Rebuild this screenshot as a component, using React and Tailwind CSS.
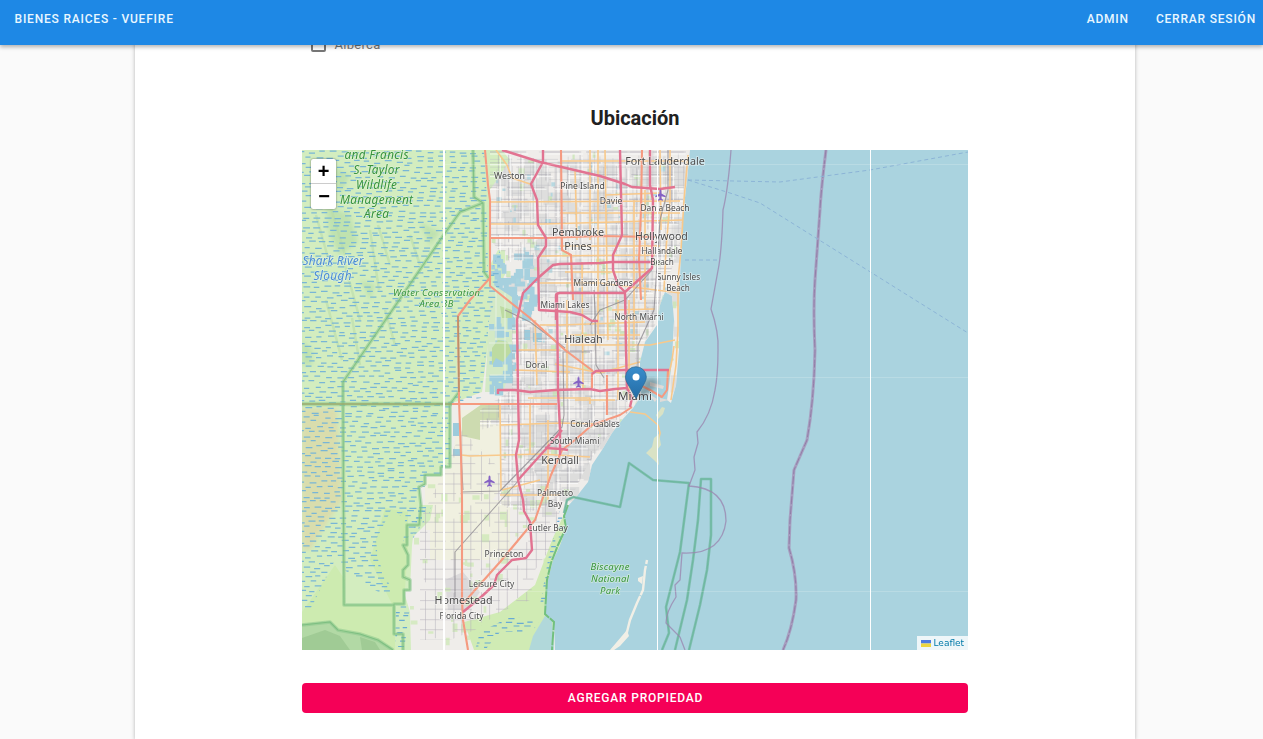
import React from "react";

// Deterministic generator so that the terrain texture is the same on each render.
function makeRandom(seed) {
  let s = seed;
  return () => {
    s = (s * 16807) % 2147483647;
    return s / 2147483647;
  };
}

function buildMarsh() {
  const rnd = makeRandom(71);
  let d = "";
  let row = 0;
  for (let y = 152; y < 650; y += 5) {
    for (let x = 298 + (row % 2) * 5 + rnd() * 3; x < 560; x += 9.5 + rnd() * 2.5) {
      d += `M${x.toFixed(1)} ${(y + rnd() * 3.4 - 1.7).toFixed(1)}h${(5 + rnd() * 2).toFixed(1)}`;
    }
    row += 1;
  }
  return d;
}

function buildStreets(seed, step) {
  const rnd = makeRandom(seed);
  let d = "";
  for (let x = 404; x < 690; x += step + rnd() * 3) {
    let y = 150 + rnd() * 20;
    while (y < 650) {
      const len = 20 + rnd() * 50;
      d += `M${x.toFixed(1)} ${y.toFixed(1)}v${len.toFixed(1)}`;
      y += len + rnd() * 24;
    }
  }
  for (let y = 152; y < 650; y += step + rnd() * 3) {
    let x = 404 + rnd() * 20;
    while (x < 690) {
      const len = 18 + rnd() * 45;
      d += `M${x.toFixed(1)} ${y.toFixed(1)}h${len.toFixed(1)}`;
      x += len + rnd() * 24;
    }
  }
  return d;
}

function buildBlocks(seed, count, x0, y0, x1, y1, size) {
  const rnd = makeRandom(seed);
  let d = "";
  for (let i = 0; i < count; i += 1) {
    const x = x0 + rnd() * (x1 - x0);
    const y = y0 + rnd() * (y1 - y0);
    const w = size * (0.4 + rnd());
    const h = size * (0.4 + rnd());
    d += `M${x.toFixed(1)} ${y.toFixed(1)}h${w.toFixed(1)}v${h.toFixed(1)}h-${w.toFixed(1)}z`;
  }
  return d;
}

const marsh = buildMarsh();
const streets = buildStreets(17, 5);
const avenues = buildStreets(93, 10);
const ruralRoads = buildStreets(29, 8);
const greyBlocks = buildBlocks(5, 130, 490, 150, 680, 440, 15);
const southBlocks = buildBlocks(8, 60, 520, 420, 600, 500, 13);
const parks = buildBlocks(31, 130, 490, 150, 680, 500, 5);
const southParks = buildBlocks(44, 60, 410, 480, 545, 640, 6);
const ponds = buildBlocks(12, 60, 491, 248, 530, 318, 8);
const westPonds = buildBlocks(77, 26, 489, 315, 508, 385, 9);
const smallPonds = buildBlocks(66, 60, 495, 155, 670, 360, 4);

const land =
  "M302 150H690L687 180L683 215L681 250L680 280L679 310L679 350L676 385L671 403L667 400L669 386L672 360L674 320L672 296L665 292L660 305L657 325L645 342L640 362L640 380L641 396L633 408L622 420L612 433L602 450L592 465L588 482L577 496L568 506L564 516L566 528L560 545L553 560L549 575L546 590L545 614L554 622L555 650H302Z";

const glades =
  "M302 150H486L490 200V278L489 320L488 345L482 392L450 404V467H441V476H425V485H419L421 505H433L430 520L413 537L412 545L410 590L404 592L410 612L411 650H302Z";

const gladesBorder =
  "M473 150L474 197L483 203L460 212L443 236L343 382V404L344 605H394M483 203L484 272L490 280M459 392L450 404V467H441V475H425V484L419 487L421 505L419 525H407V545H403L408 555V565L403 570V577L410 580V590H404V604H394V634H403V650M302 625L330 622L338 630L360 634L378 640L393 650";

const labels = [
  ["Weston", 509.5, 179, 8.8],
  ["Pine Island", 582.5, 189, 8.6],
  ["Davie", 611, 204, 8.6],
  ["Fort Lauderdale", 665, 164.5, 10.7],
  ["Dania Beach", 665, 211, 8.4],
  ["Pembroke", 578, 236, 10.8],
  ["Pines", 578, 250, 10.8],
  ["Hollywood", 661.5, 240, 10.6],
  ["Hallandale", 662, 254, 8.2],
  ["Beach", 662, 265, 8.2],
  ["Sunny Isles", 678.5, 280, 8.2],
  ["Beach", 678, 291, 8.2],
  ["Miami Gardens", 603, 286, 8.3],
  ["Miami Lakes", 565, 308, 8.4],
  ["North Miami", 639, 320, 8.3],
  ["Hialeah", 583.5, 343, 10.8],
  ["Doral", 536.5, 368, 8.6],
  ["Miami", 635, 399.5, 11.6],
  ["Coral Gables", 595, 427, 8.4],
  ["South Miami", 574.5, 444, 8.4],
  ["Kendall", 560, 464, 10.8],
  ["Palmetto", 555, 496, 8.5],
  ["Bay", 555, 507, 8.5],
  ["Cutler Bay", 547.5, 531, 8.4],
  ["Princeton", 504, 557, 8.6],
  ["Leisure City", 491.5, 586.5, 8.4],
  ["Homestead", 463.5, 603.5, 10.7],
  ["Florida City", 461.5, 619, 8.4],
];

const natureLabels = [
  ["and Francis", 376.5, 158.5, 11.8, 64],
  ["S. Taylor", 376.5, 174, 11.8, 46],
  ["Wildlife", 376.5, 188.5, 11.8, 41],
  ["Management", 376.5, 203.5, 11.8, 73],
  ["Area", 376.5, 218, 11.8, 25],
  ["Water Conservation", 436.5, 296, 9.4, 87],
  ["Area 3B", 436.5, 307, 9.4, 34],
  ["Biscayne", 610, 570, 9.6, 39],
  ["National", 610, 582, 9.6, 38],
  ["Park", 610, 594, 9.6, 20],
];

const motorways = [
  "M543 150V162L531 184L537 200L538 225L546 238V246L538 258L539 310L555 311L570 312L582 315L592 321H598",
  "M652 262L612 262L600 263L560 264L553 265L538 278L523 293L517 320L518 390L519 440L516 455L518 480L523 500L524 511L530 522L532 550L526 558L512 560L497 575L494 585L480 598L463 612",
  "M502 150L540 162L600 176L625 184L632 187L660 189L675 187",
  "M620 150L622 235L613 255V270L618 285L625 292",
  "M650 150V185L653 200L652 268L625 292L626 350L627 388L632 398L630 407",
  "M556 320V296Q556 293 560 293H625",
  "M557 293L558 390L560 430V455",
  "M518 480L545 450L562 430",
  "M545 448L562 449L568 450",
  "M498 394V390H515L530 392L555 390L590 389L600 391L615 389L627 388",
  "M669 370H625L596 371L592 374",
];

const trunks = [
  "M485 150L488 185L490 200V286L530 318L565 350L593 371",
  "M490 278L470 300L458 316L459 400L461 455L462 500V600L463 620L468 650",
  "M452 404H557",
  "M463 604L475 590L500 562L535 520L541 503L551 475L562 450L575 440L592 425L620 415L632 407",
  "M561 150L562 250L571 255L573 300",
  "M490 238L546 238L600 236L655 237",
  "M592 373V388M668 370L667 390L662 397L650 390L640 385M607 375V415",
  "M642 150L641 210L639 260L641 300",
];

const primaries = [
  "M490 202L680 201M490 224H545L682 220M538 256L655 255M560 161H685M560 213H680",
  "M496 150L507 165L512 178L530 184M598 150V345M605 150L608 340M582 262L583 390",
  "M539 283H600L680 293M540 325H560L645 322M518 350H560M555 364L600 373L640 362",
  "M515 370L570 372M528 398H590V404M500 404L501 490M530 404V455M500 425L560 423L605 424",
  "M461 455L470 456L540 454L590 457M502 490L540 480M500 495H560M570 345L650 345L675 340",
  "M688 155L684 200L681 250L678 280V330L676 365L671 400M670 150V200L666 250L664 290",
  "M674 346L672 360L668 378M630 412L645 414L658 425L660 433L657 447M629 300V400M575 400H615",
  "M548 420V500M535 320L537 385M605 195L660 193M575 170L577 240M612 310L655 309",
  "M590 150V240M634 200V340M645 190V310M565 272H650M570 335H640M567 300V390M618 300V400M560 246H660M660 150L661 230",
];

const rails = [
  "M461 492L500 491L540 450L562 427L564 415L563 352H590",
  "M519 480L455 552V600M594 290L595 310L596 365L604 378",
  "M668 150L668 190L660 220L657 265L654 310L638 345V370M590 325L600 310L625 300L652 270",
  "M505 310L530 322L565 348M461 455L463 490",
];

function Plane({ x, y }) {
  return (
    <path
      transform={`translate(${x} ${y})`}
      d="M0-5.5Q1-5.5 1-3.5V-1.6L5.2 1V2.3L1 1.2V3.6L2.5 4.8V5.7L0 5L-2.5 5.7V4.8L-1 3.6V1.2L-5.2 2.3V1L-1-1.6V-3.5Q-1-5.5 0-5.5Z"
      fill="#8461c4"
    />
  );
}

function MapCanvas() {
  return (
    <svg className="block h-full w-full" viewBox="302 150 666 500" aria-label="Mapa de Miami">
      <defs>
        <clipPath id="land">
          <path d={land} />
        </clipPath>
        <clipPath id="glades">
          <path d="M302 150H484L487 200L488 278L500 250V284L489 320L487 345L481 398L450 404V467H441V476H425V487H419L421 505H433L426 515L412 535L404 540L403 547L405 520L392 508L376 540L378 560L392 590L385 596L350 575L335 560L310 610H302Z" />
        </clipPath>
        <clipPath id="southMarsh">
          <path d="M396 606H410L404 650H395ZM480 632L510 617L540 620L532 632H500L485 650H475ZM418 510L430 512L412 540ZM560 510L566 512L565 530L550 560L545 605H540L548 560Z" />
        </clipPath>
        <clipPath id="city">
          <path d="M490 150H686L682 215L680 250L662 290L655 325L640 350V385L633 406L600 445L585 470L575 490L562 500L530 512L500 505V425L480 430V410L512 390V320L540 320V258L510 262L490 240Z" />
        </clipPath>
        <clipPath id="rural">
          <path d="M462 430L530 500L562 500L553 545L535 570L530 600L500 612L475 630L450 640H420V520L440 480Z" />
        </clipPath>
        <linearGradient id="pin" x1="0" y1="0" x2="0" y2="1">
          <stop offset="0" stopColor="#3a8dcc" />
          <stop offset="1" stopColor="#236ca5" />
        </linearGradient>
        <filter id="soft">
          <feGaussianBlur stdDeviation="2.2" />
        </filter>
        <filter id="smooth">
          <feGaussianBlur stdDeviation="0.5" />
        </filter>
      </defs>

      <rect x="302" y="150" width="666" height="500" fill="#aad3df" />

      <g filter="url(#smooth)">
        <path d={land} fill="#efedea" />
        <g clipPath="url(#land)">
          <path d="M461 410H500V490L470 530H425V480L450 467ZM470 500H510V560H430V520Z" fill="#f0f0dd" opacity=".8" />
          <path d={greyBlocks} fill="#dadada" opacity=".8" />
          <path d={southBlocks} fill="#d8d8d8" opacity=".8" />
          <path d="M445 580L463 572L480 592L468 610H448Z" fill="#dcdadb" />
          <path d="M462 418L482 404H500V420H480V440L462 436Z" fill="#cddbb0" />
          <path d={parks} fill="#c9e5b5" opacity=".8" />
          <path d={southParks} fill="#cde8b5" opacity=".75" />
          <path d="M464 622L500 612L535 585L552 540L566 510L560 560L550 650H474Z" fill="#d0ebb4" />
          <path d="M552 618L545 616L533 636L529 650H554Z" fill="#b1d8da" />
          <path d="M486 150H502L510 160L490 190V265L498 250H505V275L488 292Z" fill="#d4edc0" />
          <path d={glades} fill="#d3edbf" />
          <path d="M302 408H337L342 500L322 530L310 550H302Z" fill="#dadbab" opacity=".9" filter="url(#soft)" />
          <path d="M302 612L335 565L345 580V605H395V650H302Z" fill="#cdebb0" />
          <path d="M385 508L408 512V545L404 604H392L370 560Z" fill="#cdebb0" />
          <path d="M325 205L350 215L358 242L340 256L330 235ZM302 340L312 350V365H302ZM420 222L440 232L430 246ZM360 280L375 285L370 300ZM330 165L350 175L340 195Z" fill="#b8deaa" opacity=".75" filter="url(#soft)" />
          <path d="M316 215L330 265M330 205L345 255M345 265L360 320M378 225L390 265M352 318L360 365M385 310L395 345M370 230L379 290M410 235L420 265M326 300L342 360" stroke="#b8daa8" strokeWidth="2.5" opacity=".55" />
          <path d="M302 624L330 621L339 631L359 633L378 640L395 650H302Z" fill="#b2d9a5" />
          <path d="M302 638L325 630L340 636L350 650H302ZM360 637L375 642L380 650H362Z" fill="#98c58f" opacity=".7" />
          <path d={ponds} fill="#a6d0de" />
          <path d={smallPonds} fill="#aad3df" opacity=".8" />
          <path d="M489 282L512 297V365L503 392H485L489 320Z" fill="#d3e9c6" />
          <path d={westPonds} fill="#a2cfde" />
          <path d="M498 340L508 342L511 352L503 362L496 358L492 365V348ZM500 306L512 310V318H502Z" fill="#bddba1" />
          <path d="M489 330H512M489 343H514M496 286V340M505 293V380M490 375H510" stroke="#e4f0df" strokeWidth="1.1" />
          <path d="M453 423H459V436H453ZM453 449H461V456H453ZM524 330H530V340H524ZM533 333H542V342H533Z" fill="#9ccbdc" />
          <path d="M663 295L672 296L671 312L664 322L656 320L660 305Z" fill="#b9dfd0" />
        </g>

        <g clipPath="url(#land)">
          <g clipPath="url(#city)" fill="none">
            <path d={streets} stroke="#bdbbc2" strokeWidth=".6" opacity=".65" />
            <path d={avenues} stroke="#a5a3ac" strokeWidth=".8" opacity=".6" />
            <path d={avenues} stroke="#fff" strokeWidth=".9" opacity=".75" transform="translate(2 2)" />
          </g>
          <path d={ruralRoads} clipPath="url(#rural)" fill="none" stroke="#b7b2bc" strokeWidth=".7" opacity=".75" />
          <path d={marsh} clipPath="url(#glades)" stroke="#78b6d6" strokeWidth="1.25" />
          <path d={marsh} clipPath="url(#southMarsh)" stroke="#67aad4" strokeWidth="1.2" />
        </g>

        <g fill="none" strokeLinejoin="round">
          <path d={gladesBorder} stroke="#86c68a" strokeWidth="3.6" opacity=".5" />
          <path d={gladesBorder} stroke="#70b878" strokeWidth="1.1" opacity=".7" />
          <path d="M302 404H452" stroke="#8fca8c" strokeWidth="4.4" opacity=".55" />
          <path d="M302 404H452" stroke="#9aa96c" strokeWidth="1.6" />
          {primaries.map((d) => (
            <path key={d} d={d} stroke="#f8c98b" strokeWidth="1.6" />
          ))}
          {rails.map((d) => (
            <path key={d} d={d} stroke="#8f8b91" strokeWidth="1.1" opacity=".8" />
          ))}
          {trunks.map((d) => (
            <path key={d} d={d} stroke="#f59a80" strokeWidth="2.1" />
          ))}
          {motorways.map((d) => (
            <path key={d} d={d} stroke="#e27391" strokeWidth="2.4" />
          ))}
          <path d="M458 316L459 392" stroke="#a28a5d" strokeWidth="1.6" opacity=".7" />
        </g>

        <path d="M659 434L661 445L657 450L659 465L654 460L646 453L652 447L654 438ZM656 415L662 407L665 408L663 414L658 419Z" fill="#d9e2c5" />
        <path d="M650 382L664 386L663 389L650 386ZM660 398L669 400L660 402ZM646 392L657 399L655 402Z" fill="#dfdcd9" />
        <path d="M647 560L645 570L643 590L637 603L630 620L627 632L622 640L612 650" fill="none" stroke="#f1efe6" strokeWidth="2.4" strokeDasharray="4 2 30 1 40 1" />
        <path d="M638 578L643 576L642 584L638 581ZM627 630L629 636L620 646L614 650H610Z" fill="#f1efe6" />
        <path d="M568 505L564 516L566 528L558 545L551 563L547 580L545 614L554 622L552 650" fill="none" stroke="#72c07e" strokeWidth="2" strokeDasharray="14 1" />

        <g fill="none" stroke="#6db79e" strokeLinejoin="round">
          <path d="M564 513L567 500L573 497L620 507L629 463L653 480L689 483L680 552L666 607L669 633L662 650M675 650L687 600L693 560L698 520L701 479H711V535L707 570L700 605L689 650" strokeWidth="2.6" opacity=".75" />
          <path d="M564 513L567 500L573 497L620 507L629 463L653 480L689 483L680 552L666 607L669 633L662 650M675 650L687 600L693 560L698 520L701 479H711V535L707 570L700 605L689 650" strokeWidth="1" />
        </g>

        <g fill="none">
          <path d="M731 150Q728 190 723 210Q722 245 719 265L711 309Q719 332 718 350Q718 375 715 390Q711 415 697 432L698 443L694 457L695 470L689 486Q726 488 726 521Q722 555 682 553L680 580L675 585L676 597Q666 612 666 623L680 637L685 650" stroke="#9a83ad" strokeWidth="1.3" opacity=".75" />
          <path d="M826 150Q821 190 820 210L815 280Q813 310 815 350Q814 400 807 440L794 470L790 520L789 548Q797 575 796 600Q792 630 783 650" stroke="#a58db6" strokeWidth="3" opacity=".75" />
          <path d="M826 150Q821 190 820 210L815 280Q813 310 815 350Q814 400 807 440L794 470L790 520L789 548Q797 575 796 600Q792 630 783 650" stroke="#8f7ba5" strokeWidth=".9" strokeDasharray="8 2" />
          <path d="M688 180L780 182L870 170L968 152M688 180L730 193L760 203L968 333M685 260H719" stroke="#8cb4d6" strokeWidth="1" strokeDasharray="4 3" />
        </g>
      </g>

      <Plane x={660.5} y={195} />
      <Plane x={578.5} y={382} />
      <Plane x={489.5} y={481} />

      <g textAnchor="middle" fontFamily="'Noto Sans', sans-serif" paintOrder="stroke" strokeLinejoin="round">
        {labels.map(([text, x, y, size]) => (
          <text key={`${text}${y}`} x={x} y={y} fontSize={size} fill="#4a4a4a" stroke="#fff" strokeOpacity=".5" strokeWidth="1.7">
            {text}
          </text>
        ))}
        {natureLabels.map(([text, x, y, size, width]) => (
          <text key={`${text}${y}`} x={x} y={y} fontSize={size} textLength={width} fontStyle="italic" fill="#37933d" stroke="#e4f5db" strokeOpacity=".6" strokeWidth="1.6">
            {text}
          </text>
        ))}
        <g fontSize="11.8" fontStyle="italic" fill="#4b8bd4" stroke="#e4f5f0" strokeOpacity=".6" strokeWidth="1.6">
          <text x="333" y="265" textLength="61">Shark River</text>
          <text x="332.5" y="280" textLength="38">Slough</text>
        </g>
      </g>

      <path d="M443 150h2v500h-2zM657 150h1v500h-1zM870 150h1v500h-1z" fill="#fff" />
      <path d="M445 164.5H968M445 377.5H968M445 591.5H968" stroke="#fff" strokeWidth="1" opacity=".18" />

      <path d="M637 397L645 380Q655 376 658 382Q657 389 640 398Z" fill="#333" opacity=".32" filter="url(#soft)" />
      <path d="M636 398.5L627.2 383Q625.5 380 625.5 377.1A10.4 10.4 0 0 1 646.3 377.1Q646.3 380 644.5 383Z" fill="url(#pin)" stroke="#2e6c97" strokeWidth=".8" />
      <circle cx="636" cy="377" r="3.5" fill="#fff" />
    </svg>
  );
}

export default function App() {
  return (
    <div className="flex h-[739px] flex-col overflow-hidden bg-[#fafafa] font-['Roboto',sans-serif]">
      <header className="z-10 flex h-[45px] shrink-0 items-start justify-between bg-[#1e88e5] pt-[10px] pr-[7px] pl-[14.5px] text-[12px] leading-[18px] font-medium tracking-[0.8px] text-[#e9f7ff] shadow-[0_2px_4px_rgba(0,0,0,0.3)]">
        <span>BIENES RAICES - VUEFIRE</span>
        <nav className="flex gap-[27px]">
          <a>ADMIN</a>
          <a>CERRAR SESIÓN</a>
        </nav>
      </header>

      <main className="mx-auto -mt-[10px] flex w-[1000px] translate-x-[3px] grow flex-col bg-white shadow-[0_1px_4px_rgba(0,0,0,0.28)]">
        <form className="mx-auto flex w-[666px] flex-col">
          <label className="flex h-[18px] items-center gap-[9px] pl-[9px] text-[13px] tracking-[0.3px] text-[#777]">
            <span className="h-[15px] w-[15px] rounded-[2px] border-2 border-[#777]" />
            <span className="translate-y-px">Alberca</span>
          </label>

          <h2 className="mt-[50px] pl-px text-center text-[20px] leading-[30px] font-bold text-[#212121]">Ubicación</h2>

          <div className="relative mt-[17px] h-[500px] w-[666px] overflow-hidden">
            <MapCanvas />
            <div className="absolute top-[9px] left-[9px] flex w-[25px] flex-col rounded-[2px] bg-white text-center font-['Liberation_Sans',sans-serif] text-[20px] font-bold text-black shadow-[0_0_2px_rgba(0,0,0,0.6)]">
              <span className="h-[25px] border-b border-[#ccc] pl-px leading-[24px]">+</span>
              <span className="h-[25px] pl-[2px] leading-[24px]">−</span>
            </div>
            <div className="absolute right-0 bottom-0 flex h-[14px] w-[51px] items-center gap-[3px] bg-white/80 pl-[4px] font-['DejaVu_Sans',sans-serif] text-[9px] text-[#0078a8]">
              <svg className="h-[7px] w-[10px]" viewBox="0 0 10 7">
                <path d="M0 0h10v3.5H0z" fill="#4c7be1" />
                <path d="M0 3.5h10V7H0z" fill="#ecd63f" />
              </svg>
              <span className="translate-y-px">Leaflet</span>
            </div>
          </div>

          <button type="button" className="mt-[33px] h-[30px] rounded-[4px] bg-[#f50057] pl-[2px] text-[12px] font-medium tracking-[0.8px] text-white">
            AGREGAR PROPIEDAD
          </button>
        </form>
      </main>
    </div>
  );
}
